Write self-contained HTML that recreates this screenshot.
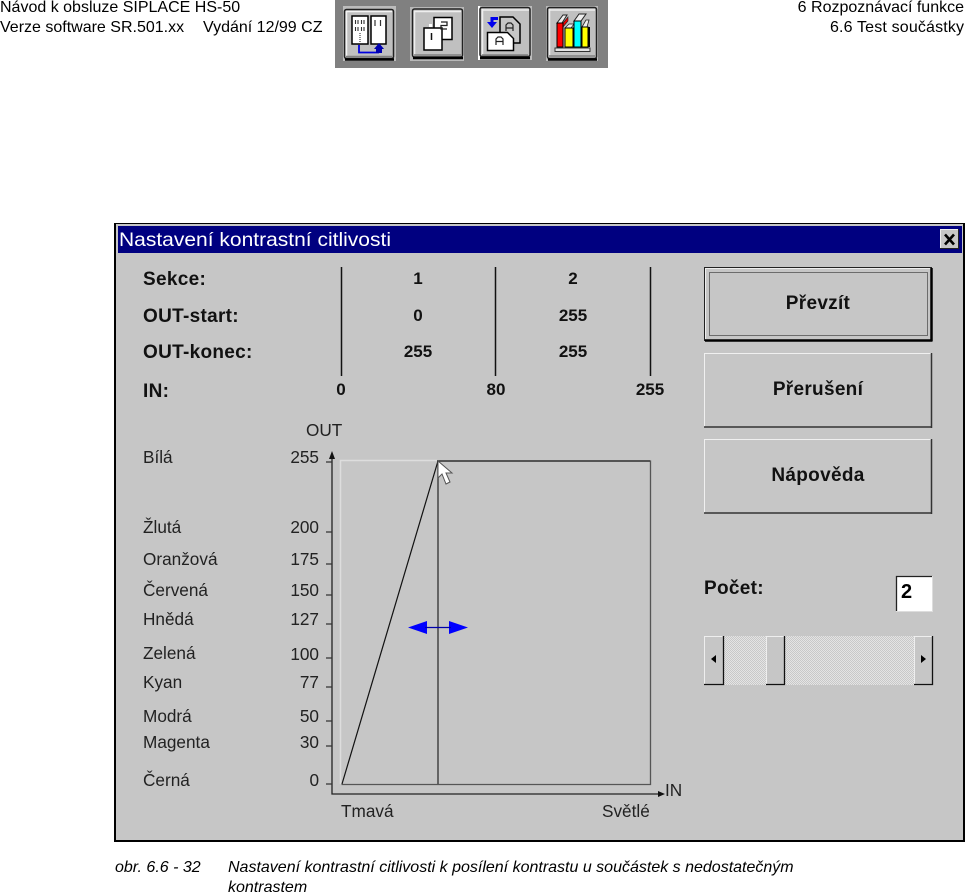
<!DOCTYPE html>
<html lang="cs"><head><meta charset="utf-8"><title>Nastavení kontrastní citlivosti</title>
<style>
html,body{margin:0;padding:0;background:#fff;width:965px;height:893px;overflow:hidden}
svg{display:block;position:absolute;left:0;top:0}
text{font-family:"Liberation Sans",Arial,sans-serif;fill:#111}
.h{font-size:16px;fill:#000}
.b{font-weight:bold;font-size:19px;letter-spacing:.3px}
.r{font-size:17.200px;fill:#222}
.n{font-weight:bold;font-size:17px;text-anchor:middle}
.e{text-anchor:end}
.m{text-anchor:middle}
.c{font-size:16px;font-style:italic;fill:#000}
</style></head><body>
<svg width="965" height="893" viewBox="0 0 965 893" xmlns="http://www.w3.org/2000/svg">
<defs>
<pattern id="d" width="2" height="2" patternUnits="userSpaceOnUse"><rect width="2" height="2" fill="#e4e4e4"/><rect width="1" height="1" fill="#c8c8c8"/><rect x="1" y="1" width="1" height="1" fill="#c8c8c8"/></pattern>
</defs>
<rect width="965" height="893" fill="#fff"/>
<!-- header -->
<text class="h" x="0" y="12">Návod k obsluze SIPLACE HS-50</text>
<text class="h" x="0" y="32">Verze software SR.501.xx</text>
<text class="h" x="203" y="32">Vydání 12/99 CZ</text>
<text class="h e" x="964" y="12">6 Rozpoznávací funkce</text>
<text class="h e" x="964" y="32" textLength="134" lengthAdjust="spacing">6.6 Test součástky</text>
<!-- toolbar -->
<rect x="335" y="0" width="273" height="68" fill="#808080"/>
<!-- button 1 -->
<rect x="343" y="6" width="53" height="55" fill="#bcbcbc"/>
<rect x="344.500" y="9.500" width="49" height="49" rx="2" fill="#c0c0c0" stroke="#222" stroke-width="1.500"/>
<path d="M346 11.500h46M346.500 11v46" stroke="#f4f4f4" stroke-width="1.500"/>
<path d="M345 59.500h49" stroke="#000" stroke-width="2.500"/><path d="M346 56.500h46" stroke="#808080" stroke-width="1.500"/>
<rect x="352" y="16" width="16" height="28" fill="#fff" stroke="#000" stroke-width="1.500"/>
<rect x="371" y="16" width="15" height="28" fill="#fff" stroke="#000" stroke-width="1.500"/>
<path d="M355.500 20v4M358 20v4M361.500 20v4M364 20v4M355.500 27v4M358 27v4M361.500 27v4M364 27v4" stroke="#333" stroke-width="1.100"/>
<path d="M360 33v9" stroke="#666" stroke-width="1.500" stroke-dasharray="1 1"/>
<path d="M375 20v6M380.500 20v6" stroke="#333" stroke-width="1.200"/>
<path d="M359 45v7.500h20" stroke="#0000dd" stroke-width="1.800" fill="none"/>
<path d="M374 49l5-6 5 6z" fill="#0000b0"/><rect x="376" y="48" width="6" height="5" fill="#0000b0"/>
<!-- button 2 -->
<rect x="410" y="7" width="54" height="54" fill="#b8b8b8"/>
<rect x="412.500" y="9" width="50" height="48" rx="2" fill="#c0c0c0" stroke="#222" stroke-width="1.500"/>
<path d="M414 11.500h47M414.500 11v45" stroke="#eee" stroke-width="1.500"/>
<path d="M413 58h50" stroke="#000" stroke-width="2.500"/><path d="M414 55h47" stroke="#808080" stroke-width="1.500"/>
<path d="M434 17.500h18v22h-18z" fill="#fff" stroke="#000" stroke-width="1.500"/>
<path d="M424 28h18v22h-18z" fill="#fff" stroke="#000" stroke-width="1.500"/>
<rect x="429" y="24" width="3" height="3" fill="#fff"/>
<path d="M431.500 33v7" stroke="#111" stroke-width="1.500"/>
<path d="M441 22h6v3.500h-6v3.500h6" stroke="#222" stroke-width="1.300" fill="none"/>
<!-- button 3 -->
<rect x="478" y="6" width="54" height="54" fill="#bcbcbc"/><rect x="478" y="6" width="2" height="54" fill="#fff"/>
<rect x="480" y="7.500" width="50" height="49" rx="2" fill="#c0c0c0" stroke="#222" stroke-width="1.500"/>
<path d="M482 10h47M482.500 9v46" stroke="#eee" stroke-width="1.500"/>
<path d="M480 58h50" stroke="#000" stroke-width="2.500"/><path d="M482 55h46" stroke="#808080" stroke-width="1.500"/>
<path d="M500 17h13l7 7v19h-20z" fill="#c6c6c6" stroke="#000" stroke-width="1.500"/>
<path d="M487.500 32.500h20l6 6v12h-26z" fill="#fff" stroke="#000" stroke-width="1.500"/>
<path d="M496 45v-6l2-2h3l2 2v6M496 41.500h7M506 31v-6l2-2h3l2 2v6M506 28h7" stroke="#222" stroke-width="1.200" fill="none"/>
<path d="M498 18.500h-6v6" stroke="#0000ee" stroke-width="3" fill="none"/>
<path d="M487 22h10l-5 6z" fill="#0000ee"/>
<!-- button 4 -->
<rect x="546" y="6" width="52" height="55" fill="#b8b8b8"/>
<rect x="547.500" y="7.500" width="49" height="51" rx="2" fill="#c0c0c0" stroke="#222" stroke-width="1.500"/>
<path d="M549 10h46M549.500 9v48" stroke="#eee" stroke-width="1.500"/>
<path d="M548 59.500h49" stroke="#000" stroke-width="2.500"/><path d="M549 56h46" stroke="#808080" stroke-width="1.500"/>
<path d="M557 23l6-8h4l-5 8z" fill="#eee" stroke="#222" stroke-width="1"/>
<path d="M563 23l5-6v4l-5 6z" fill="#ee0000" stroke="#222" stroke-width=".6"/>
<rect x="557" y="23" width="6" height="24" fill="#ff0000" stroke="#000"/>
<path d="M565 28l4-4h5l-3 4z" fill="#eee" stroke="#222" stroke-width=".7"/>
<rect x="565" y="28" width="8" height="19" fill="#ffff00" stroke="#000"/>
<path d="M574 21l5-7h7l-5 7z" fill="#eee" stroke="#222"/>
<rect x="574" y="21" width="7" height="26" fill="#00ffff" stroke="#000"/>
<path d="M582 27l4-7h3l-2 7z" fill="#eee" stroke="#222" stroke-width=".8"/>
<rect x="582" y="27" width="6" height="20" fill="#ffff00" stroke="#000"/>
<rect x="588" y="27" width="2" height="20" fill="#000"/>
<rect x="555" y="48" width="35" height="3.500" fill="#e4e4e4" stroke="#333"/>
<!-- window -->
<rect x="114" y="223" width="851" height="619" fill="#000"/>
<rect x="116" y="224" width="847" height="616" fill="#c6c6c6"/>
<rect x="118" y="226" width="844" height="27" fill="#000080"/>
<text x="119" y="246" style="font-size:19.500px;fill:#fff" textLength="272" lengthAdjust="spacingAndGlyphs">Nastavení kontrastní citlivosti</text>
<rect x="940" y="229" width="19" height="20" fill="#c6c6c6"/>
<path d="M940.500 249v-19.500h18" stroke="#eee" fill="none"/><path d="M940 248.500h18.500v-19.500" stroke="#222" fill="none"/>
<path d="M945 234.500l9 10M954 234.500l-9 10" stroke="#000" stroke-width="2.600"/>
<!-- top table -->
<text class="b" x="143" y="285">Sekce:</text>
<text class="b" x="143" y="322">OUT-start:</text>
<text class="b" x="143" y="358">OUT-konec:</text>
<text class="b" x="143" y="397">IN:</text>
<path d="M341.500 267v109M495.500 267v109M650.500 267v109" stroke="#111" stroke-width="1.500"/>
<text class="n" x="418" y="284">1</text><text class="n" x="573" y="284">2</text>
<text class="n" x="418" y="321">0</text><text class="n" x="573" y="321">255</text>
<text class="n" x="418" y="357">255</text><text class="n" x="573" y="357">255</text>
<text class="n" x="341" y="395">0</text><text class="n" x="496" y="395">80</text><text class="n" x="650" y="395">255</text>
<!-- buttons -->
<rect x="704.500" y="267.500" width="227" height="73" fill="#c6c6c6" stroke="#222"/>
<path d="M705.500 339v-70.500h225" stroke="#eee" fill="none"/>
<path d="M705 340.500h227.500M931.500 268v73" stroke="#000" stroke-width="2.500"/>
<rect x="709.500" y="272.500" width="218" height="63" fill="none" stroke="#111" stroke-dasharray="1 1"/>
<text class="b m" x="818" y="309">Převzít</text>
<rect x="704" y="353" width="228" height="75" fill="#c6c6c6"/>
<path d="M704.500 427v-73.500h227" stroke="#f0f0f0" fill="none"/><path d="M704 427h228M931.500 353v75" stroke="#333" stroke-width="1.500" fill="none"/>
<text class="b m" x="818" y="395">Přerušení</text>
<rect x="704" y="439" width="228" height="75" fill="#c6c6c6"/>
<path d="M704.500 513v-73.500h227" stroke="#f0f0f0" fill="none"/><path d="M704 513h228M931.500 439v75" stroke="#333" stroke-width="1.500" fill="none"/>
<text class="b m" x="818" y="481">Nápověda</text>
<!-- pocet -->
<text class="b" x="704" y="594">Počet:</text>
<rect x="896" y="576" width="37" height="36" fill="#fff"/>
<path d="M896.500 611v-34.500h36" stroke="#222" stroke-width="1.300" fill="none"/>
<path d="M896 611.500h37M932.500 576v36" stroke="#ddd" fill="none"/>
<text x="901" y="598" style="font-size:20px;font-weight:bold;fill:#000">2</text>
<!-- scrollbar -->
<rect x="723" y="636" width="192" height="49" fill="url(#d)"/>
<rect x="704" y="636" width="19" height="49" fill="#c6c6c6"/><path d="M704.500 684v-47.500h18" stroke="#eee" fill="none"/><path d="M704 684.500h19.500v-48.500" stroke="#111" stroke-width="1.300" fill="none"/>
<rect x="766" y="636" width="19" height="49" fill="#c6c6c6"/><path d="M766.500 684v-47.500h18" stroke="#eee" fill="none"/><path d="M766 684.500h18.500v-48.500" stroke="#111" stroke-width="1.300" fill="none"/>
<rect x="914" y="636" width="19" height="49" fill="#c6c6c6"/><path d="M914.500 684v-47.500h18" stroke="#eee" fill="none"/><path d="M914 684.500h18.500v-48.500" stroke="#111" stroke-width="1.300" fill="none"/>
<path d="M716 655v8l-5-4z" fill="#000"/><path d="M921 655v8l5-4z" fill="#000"/>
<!-- left labels -->
<text class="r" x="143" y="463">Bílá</text>
<text class="r" x="143" y="533">Žlutá</text>
<text class="r" x="143" y="565">Oranžová</text>
<text class="r" x="143" y="596">Červená</text>
<text class="r" x="143" y="625">Hnědá</text>
<text class="r" x="143" y="659">Zelená</text>
<text class="r" x="143" y="688">Kyan</text>
<text class="r" x="143" y="722">Modrá</text>
<text class="r" x="143" y="748">Magenta</text>
<text class="r" x="143" y="786">Černá</text>
<text class="r" x="306" y="436">OUT</text>
<text class="r e" x="319" y="463">255</text>
<text class="r e" x="319" y="533">200</text>
<text class="r e" x="319" y="565">175</text>
<text class="r e" x="319" y="596">150</text>
<text class="r e" x="319" y="625">127</text>
<text class="r e" x="319" y="660">100</text>
<text class="r e" x="319" y="688">77</text>
<text class="r e" x="319" y="722">50</text>
<text class="r e" x="319" y="748">30</text>
<text class="r e" x="319" y="786">0</text>
<text class="r" x="341" y="817">Tmavá</text>
<text class="r" x="602" y="817">Světlé</text>
<text class="r" x="665" y="796">IN</text>
<!-- axes -->
<path d="M332 458v336h328" stroke="#222" stroke-width="1.300" fill="none"/>
<path d="M332 451l-3 8h6zM665 794l-7-3v6z" fill="#111"/>
<path d="M326 462h6M326 532h6M326 564h6M326 595h6M326 624h6M326 658h6M326 687h6M326 721h6M326 746h6M326 784h6" stroke="#333" stroke-width="1.200"/>
<!-- plot -->
<path d="M340.500 784v-323.500h97" stroke="#ddd" stroke-width="1.500" fill="none"/>
<path d="M437 461h213.500v323.500h-309" stroke="#555" stroke-width="1.300" fill="none"/>
<path d="M437 461h213" stroke="#222" stroke-width="1.300"/>
<path d="M438 461v323" stroke="#444" stroke-width="1.500"/>
<path d="M342 784L438 461" stroke="#111" stroke-width="1.200"/>
<path d="M438 461v17l4-4 4 10 4-2-4-9h6z" fill="#fff" stroke="#555" stroke-width="1"/>
<path d="M408 627.500l19-6.500v13zM468 627.500l-19-6.500v13z" fill="#00f"/>
<path d="M425 627.500h26" stroke="#00a" stroke-width="1.200"/>
<!-- caption -->
<text class="c" x="115" y="872">obr. 6.6 - 32</text>
<text class="c" x="228" y="872">Nastavení kontrastní citlivosti k posílení kontrastu u součástek s nedostatečným</text>
<text class="c" x="228" y="892">kontrastem</text>
</svg>
</body></html>
